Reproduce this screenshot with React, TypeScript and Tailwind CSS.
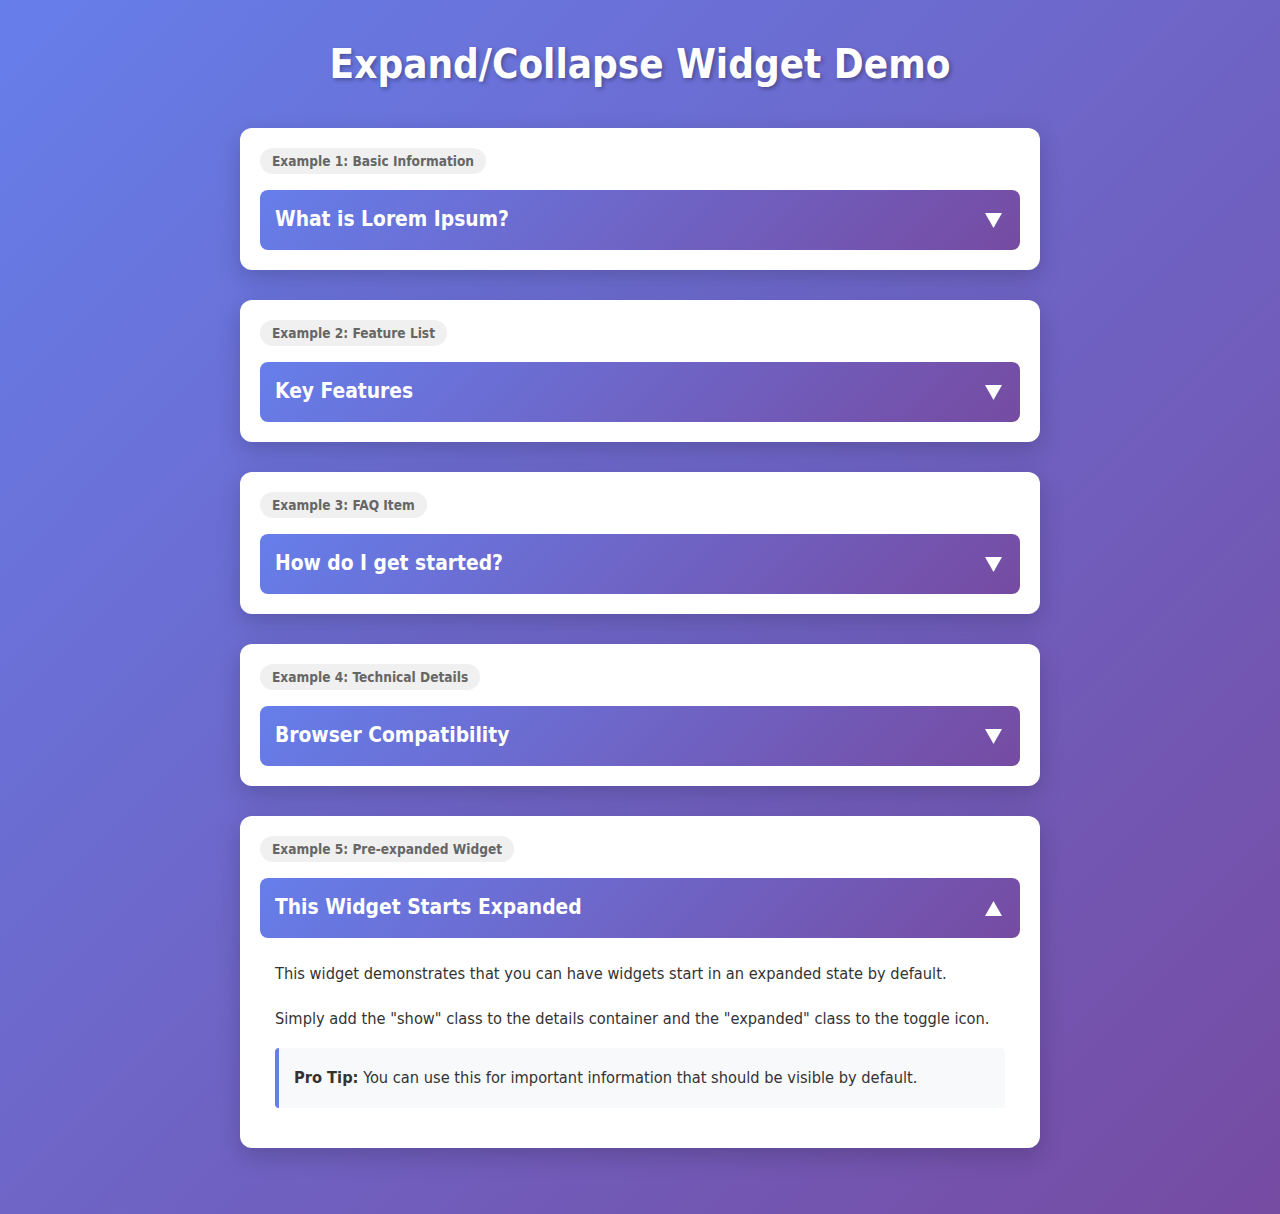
import { useState } from "react";

type Widget = {
  label: string;
  title: string;
  open?: boolean;
};

const widgets: Widget[] = [
  { label: "Example 1: Basic Information", title: "What is Lorem Ipsum?" },
  { label: "Example 2: Feature List", title: "Key Features" },
  { label: "Example 3: FAQ Item", title: "How do I get started?" },
  { label: "Example 4: Technical Details", title: "Browser Compatibility" },
  { label: "Example 5: Pre-expanded Widget", title: "This Widget Starts Expanded", open: true },
];

function Arrow({ open }: { open: boolean }) {
  return (
    <svg width="17" height="17" viewBox="0 0 17 17" className={open ? "rotate-180" : ""}>
      <polygon points="0,1 17,1 8.5,16" fill="white" />
    </svg>
  );
}

function ExpandWidget({ label, title, open = false }: Widget) {
  const [expanded, setExpanded] = useState(open);

  return (
    <div className="mb-[30px] rounded-xl bg-white p-5 shadow-[0_8px_24px_rgba(0,0,0,0.18)]">
      <span className="mb-4 block h-[26px] w-fit rounded-full bg-[#f0f0f0] px-3 text-[13.6px] font-bold leading-[26px] text-[#666]">
        {label}
      </span>
      <button
        onClick={() => setExpanded(!expanded)}
        className="flex h-[60px] w-full items-center justify-between rounded-lg bg-[linear-gradient(135deg,#667eea_0%,#764ba2_100%)] pl-[15px] pr-[18px] text-left text-[20.8px] font-bold text-white"
      >
        <span>{title}</span>
        <Arrow open={expanded} />
      </button>
      {expanded && (
        <div className="px-[15px] pb-5 pt-[21px] text-[16.3px] leading-[29.3px] text-[#333]">
          <p className="mb-4">
            This widget demonstrates that you can have widgets start in an expanded state by default.
          </p>
          <p className="mb-[14px]">
            Simply add the "show" class to the details container and the "expanded" class to the toggle icon.
          </p>
          <div className="rounded border-l-4 border-[#667eea] bg-[#f8f9fa] p-[15px] leading-[30px]">
            <strong>Pro Tip:</strong> You can use this for important information that should be visible by default.
          </div>
        </div>
      )}
    </div>
  );
}

export default function App() {
  return (
    <div className="min-h-screen bg-[linear-gradient(135deg,#667eea_0%,#764ba2_100%)] px-5 pb-5 pt-10 font-['DejaVu_Sans_Condensed','DejaVu_Sans',sans-serif]">
      <div className="mx-auto max-w-[800px]">
        <h1 className="mb-10 text-center text-[40px] font-bold leading-[48px] text-white [text-shadow:2px_2px_4px_rgba(0,0,0,0.3)]">
          Expand/Collapse Widget Demo
        </h1>
        {widgets.map((w) => (
          <ExpandWidget key={w.label} {...w} />
        ))}
      </div>
    </div>
  );
}
